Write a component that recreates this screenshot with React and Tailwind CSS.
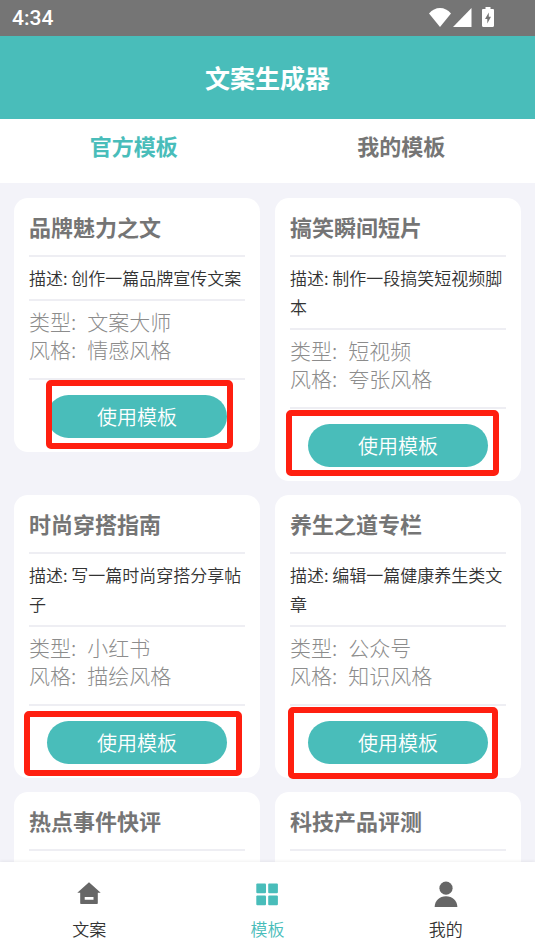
import { useState } from "react";

const templates = [
  {
    id: 1,
    title: "品牌魅力之文",
    desc: "创作一篇品牌宣传文案",
    type: "文案大师",
    style: "情感风格",
    mark: "-top-[15px] -bottom-[11px] left-[17px] right-3",
  },
  {
    id: 2,
    title: "搞笑瞬间短片",
    desc: "制作一段搞笑短视频脚本",
    type: "短视频",
    style: "夸张风格",
    mark: "-top-[14px] -bottom-[9px] -left-1 right-[7px]",
  },
  {
    id: 3,
    title: "时尚穿搭指南",
    desc: "写一篇时尚穿搭分享帖子",
    type: "小红书",
    style: "描绘风格",
    mark: "-top-[10px] -bottom-3 -left-[5px] right-[3px]",
  },
  {
    id: 4,
    title: "养生之道专栏",
    desc: "编辑一篇健康养生类文章",
    type: "公众号",
    style: "知识风格",
    mark: "-top-[14px] -bottom-[15px] -left-0.5 right-2",
  },
  {
    id: 5,
    title: "热点事件快评",
    desc: "撰写一篇热点事件评论",
    type: "公众号",
    style: "犀利风格",
  },
  {
    id: 6,
    title: "科技产品评测",
    desc: "撰写一篇科技产品评测",
    type: "文案大师",
    style: "专业风格",
  },
];

function StatusBar() {
  return (
    <div className="flex h-9 shrink-0 items-center justify-between bg-[#757575] pr-[41px] pl-3 text-white">
      <span className="pt-0.5 font-['Roboto',sans-serif] text-[21px] font-medium">
        4:34
      </span>
      <div className="flex items-end pb-0.5">
        <svg width="22" height="19" viewBox="0 0 22 19" fill="currentColor">
          <path d="M11 19 0 5.4C3.2 1.9 6.8 0 11 0s7.8 1.9 11 5.4Z" />
        </svg>
        <svg
          className="ml-0.5"
          width="19"
          height="19"
          viewBox="0 0 19 19"
          fill="currentColor"
        >
          <path d="M18.5 0v19H0Z" />
        </svg>
        <svg
          className="ml-2.5"
          width="12"
          height="20"
          viewBox="0 0 12 20"
          fill="currentColor"
        >
          <path
            fillRule="evenodd"
            d="M3.5 0h5v2h2.3c.7 0 1.2.5 1.2 1.2v15.6c0 .7-.5 1.2-1.2 1.2H1.2C.5 20 0 19.5 0 18.8V3.2C0 2.5.5 2 1.2 2h2.3Zm3.3 5.5L3 12h2.3v4.5L9 9.8H6.8Z"
          />
        </svg>
      </div>
    </div>
  );
}

function TemplateCard({ template }) {
  const { title, desc, type, style, mark } = template;
  return (
    <div className="rounded-[14px] bg-white px-[15px] py-3.5 text-[#8c8c8c]">
      <h2 className="border-b-2 border-[#eeeef3] pb-[15px] text-[22px] leading-7 font-bold text-[#757575]">
        {title}
      </h2>
      <p className="border-b-2 border-[#eeeef3] pt-1.5 pb-[7px] text-[17px] leading-[29px] font-[350] text-[#333]">
        {`描述: ${desc}`}
      </p>
      <div className="border-b-2 border-[#eeeef3] pt-1.5 pb-[15px] text-[21px] leading-7 font-light">
        <div className="flex gap-[11px]">
          <span>类型:</span>
          <span>{type}</span>
        </div>
        <div className="flex gap-[11px]">
          <span>风格:</span>
          <span>{style}</span>
        </div>
      </div>
      <div className="relative mt-[15px] flex justify-center">
        <button className="h-[43px] w-5/6 cursor-pointer rounded-full bg-[#49bdba] text-[20px] font-[350] text-white">
          使用模板
        </button>
        {mark && (
          <span
            className={`pointer-events-none absolute rounded-[5px] border-6 border-[#ff1f10] ${mark}`}
          />
        )}
      </div>
    </div>
  );
}

function HomeIcon() {
  return (
    <svg width="26" height="26" viewBox="0 0 26 26" fill="currentColor">
      <path
        fillRule="evenodd"
        d="M13 1.3 24.7 11.8h-2.9V22c0 .6-.4 1-1 1H5.2c-.6 0-1-.4-1-1V11.8H1.3ZM8.7 16v2.7h8.8V16Z"
      />
    </svg>
  );
}

function GridIcon() {
  return (
    <svg width="26" height="26" viewBox="0 0 26 26" fill="currentColor">
      <rect x="2.3" y="2.5" width="9.7" height="9.7" rx="1" />
      <rect x="14.2" y="2.5" width="9.7" height="9.7" rx="1" />
      <rect x="2.3" y="14.6" width="9.7" height="9.7" rx="1" />
      <rect x="14.2" y="14.6" width="9.7" height="9.7" rx="1" />
    </svg>
  );
}

function UserIcon() {
  return (
    <svg width="26" height="26" viewBox="0 0 26 26" fill="currentColor">
      <circle cx="13" cy="7.2" r="6.6" />
      <path d="M1.6 26c.3-6.5 4.9-10.7 11.4-10.7S24.1 19.5 24.4 26Z" />
    </svg>
  );
}

const navItems = [
  { label: "文案", Icon: HomeIcon },
  { label: "模板", Icon: GridIcon },
  { label: "我的", Icon: UserIcon },
];

function App() {
  const [tab, setTab] = useState("官方模板");
  const [page, setPage] = useState("模板");

  return (
    <div className="flex h-screen flex-col bg-[#f3f3f9] font-['Noto_Sans_CJK_SC',sans-serif]">
      <StatusBar />
      <header className="flex h-[83px] shrink-0 items-center justify-center bg-[#49bdba]">
        <h1 className="text-[25px] font-bold text-white">文案生成器</h1>
      </header>
      <div className="flex h-16 shrink-0 bg-white pb-3">
        {["官方模板", "我的模板"].map((name) => (
          <button
            key={name}
            className={`flex-1 cursor-pointer text-[22px] font-bold ${
              tab === name ? "text-[#49bdba]" : "text-[#757575]"
            }`}
            onClick={() => setTab(name)}
          >
            {name}
          </button>
        ))}
      </div>
      <main className="min-h-0 flex-1 overflow-y-auto [scrollbar-width:none]">
        <div className="grid grid-cols-2 items-start gap-x-[15px] gap-y-3.5 px-3.5 py-[15px]">
          {templates.map((template) => (
            <TemplateCard key={template.id} template={template} />
          ))}
        </div>
      </main>
      <nav className="relative flex h-[89px] shrink-0 bg-white pt-[19px] shadow-[0_-1px_3px_rgba(0,0,0,0.06)]">
        {navItems.map(({ label, Icon }) => (
          <button
            key={label}
            className="flex flex-1 cursor-pointer flex-col items-center gap-2.5"
            onClick={() => setPage(label)}
          >
            <span className={page === label ? "text-[#49bdba]" : "text-[#666]"}>
              <Icon />
            </span>
            <span
              className={`text-[17px] leading-6 font-[350] ${
                page === label ? "text-[#49bdba]" : "text-[#333]"
              }`}
            >
              {label}
            </span>
          </button>
        ))}
      </nav>
    </div>
  );
}

export default App;
